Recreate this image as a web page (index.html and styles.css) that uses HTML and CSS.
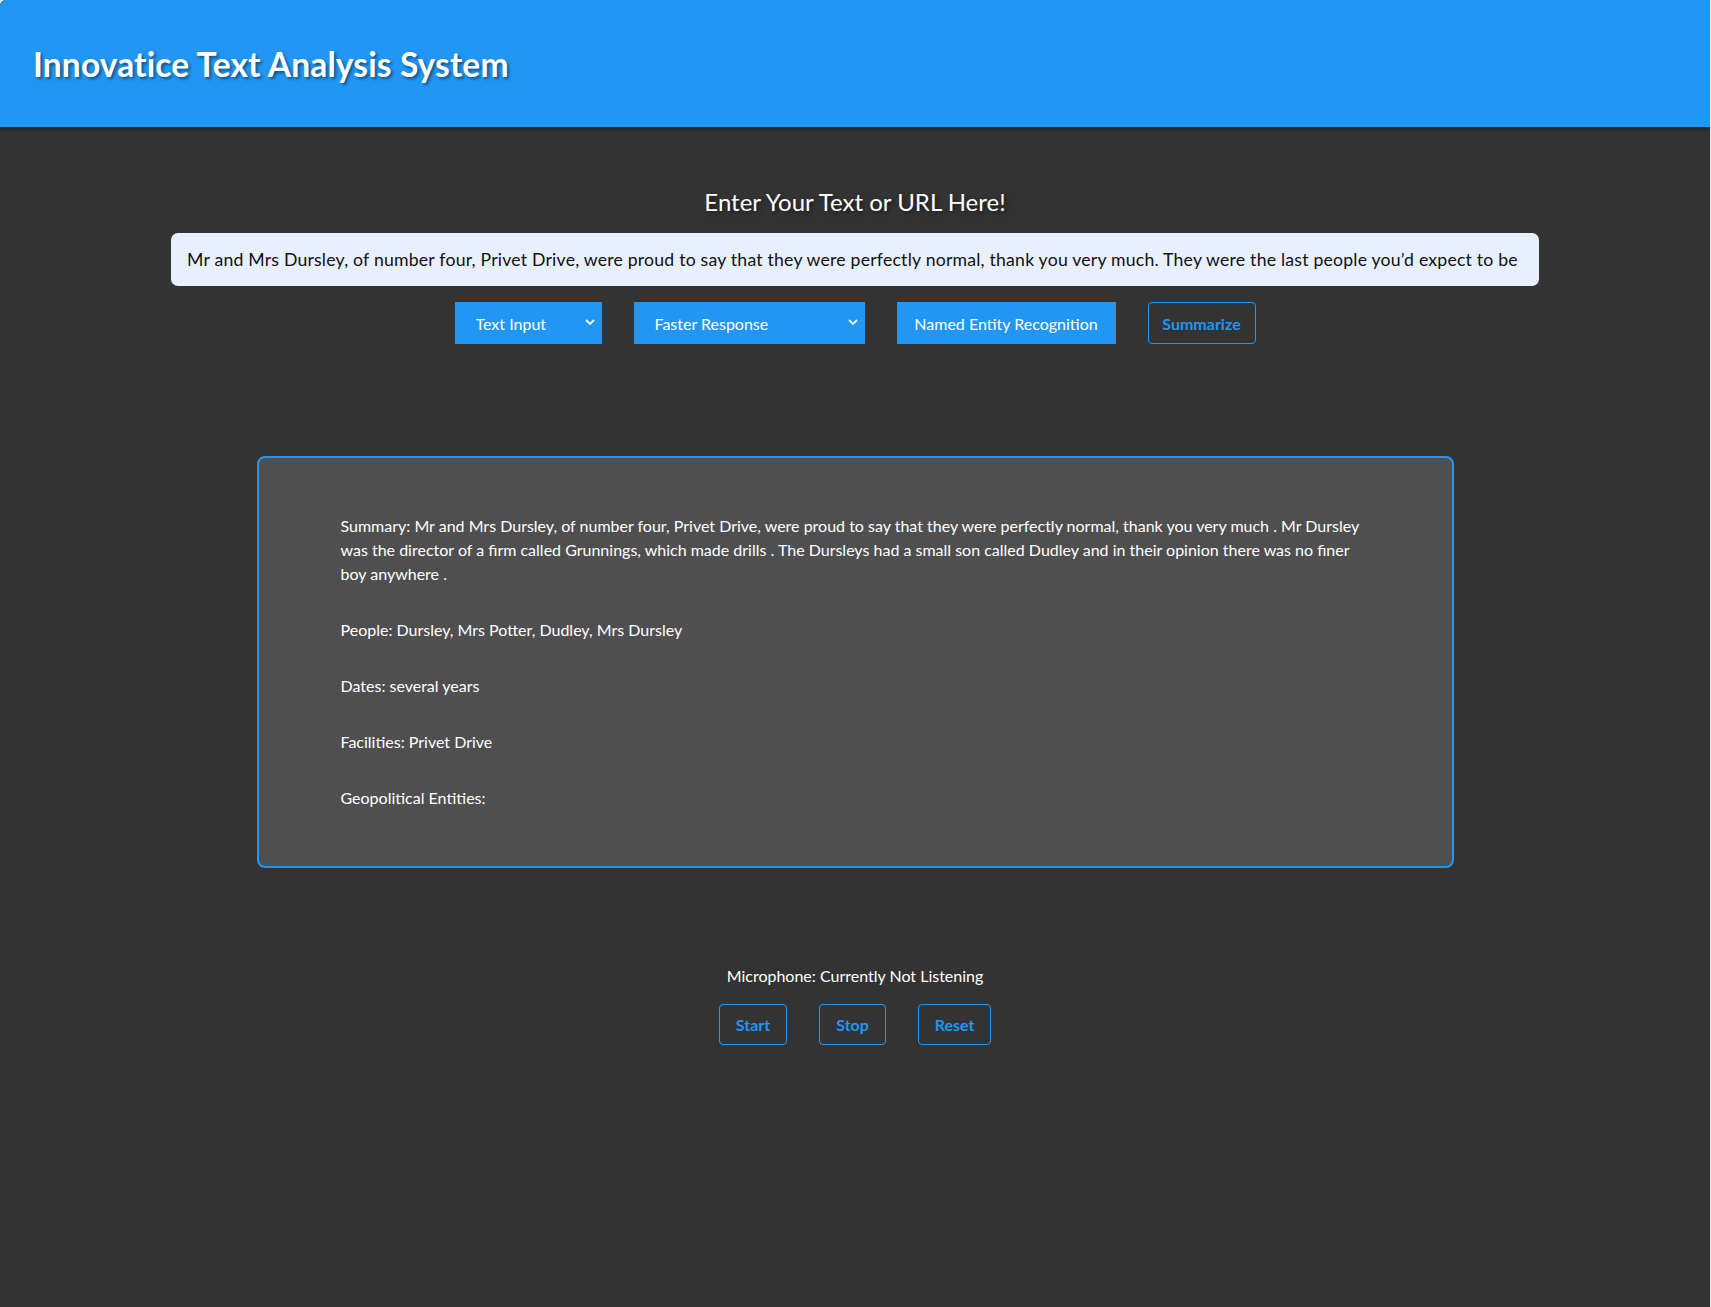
FILE: index.html
```html
<!DOCTYPE html>
<html lang="en">
<head>
<meta charset="utf-8">
<title>Innovatice Text Analysis System</title>
<link rel="stylesheet" href="styles.css">
</head>
<body>
<div class="page">
  <header class="topbar">
    <h1 class="title">Innovatice Text Analysis System</h1>
  </header>
  <main class="main">
    <h2 class="prompt">Enter Your Text or URL Here!</h2>
    <input class="text-input" type="text" value="Mr and Mrs Dursley, of number four, Privet Drive, were proud to say that they were perfectly normal, thank you very much. They were the last people you’d expect to be">
    <div class="controls">
      <div class="select-wrap select-mode">
        <select class="select">
          <option>Text Input</option>
        </select>
        <svg class="chevron" viewBox="0 0 10 6" width="10" height="6"><path d="M1 1l4 4 4-4" fill="none" stroke="#fff" stroke-width="1.8"/></svg>
      </div>
      <div class="select-wrap select-speed">
        <select class="select">
          <option>Faster Response</option>
        </select>
        <svg class="chevron" viewBox="0 0 10 6" width="10" height="6"><path d="M1 1l4 4 4-4" fill="none" stroke="#fff" stroke-width="1.8"/></svg>
      </div>
      <button class="btn-solid btn-ner">Named Entity Recognition</button>
      <button class="btn-outline btn-summarize">Summarize</button>
    </div>
    <section class="result">
      <p class="result-line">Summary: Mr and Mrs Dursley, of number four, Privet Drive, were proud to say that they were perfectly normal, thank you very much . Mr Dursley was the director of a firm called Grunnings, which made drills . The Dursleys had a small son called Dudley and in their opinion there was no finer boy anywhere .</p>
      <p class="result-line">People: Dursley, Mrs Potter, Dudley, Mrs Dursley</p>
      <p class="result-line">Dates: several years</p>
      <p class="result-line">Facilities: Privet Drive</p>
      <p class="result-line">Geopolitical Entities:</p>
    </section>
    <div class="mic">
      <p class="mic-status">Microphone: Currently Not Listening</p>
      <div class="mic-buttons">
        <button class="btn-outline btn-mic btn-start">Start</button>
        <button class="btn-outline btn-mic btn-stop">Stop</button>
        <button class="btn-outline btn-mic btn-reset">Reset</button>
      </div>
    </div>
  </main>
</div>
</body>
</html>
```
FILE: styles.css
```css
html, body {
  margin: 0;
  padding: 0;
}
body {
  background: #e9e9e9;
  font-family: "Lato", "Open Sans", sans-serif;
  color: #fff;
}
.page {
  width: 1710px;
  min-height: 1307px;
  background: #333333;
  border-top-left-radius: 6px;
  overflow: hidden;
}
.topbar {
  height: 127px;
  background: #2196f3;
  display: flex;
  align-items: center;
  padding-left: 33px;
  box-shadow: 0 2px 4px rgba(0, 0, 0, 0.35);
}
.title {
  margin: 0;
  font-size: 33.6px;
  font-weight: 700;
  color: #fff;
  text-shadow: 2px 2px 3px rgba(0, 0, 0, 0.45);
  letter-spacing: 0.1px;
}
.main {
  display: flex;
  flex-direction: column;
  align-items: center;
}
.prompt {
  margin: 60px 0 0;
  height: 30px;
  line-height: 30px;
  font-size: 24px;
  font-weight: 400;
  color: #fff;
  text-shadow: 2px 2px 4px rgba(0, 0, 0, 0.5);
}
.text-input {
  box-sizing: border-box;
  margin-top: 16px;
  width: 1368px;
  height: 53px;
  border: none;
  border-radius: 7px;
  background: #e8f0fe;
  padding: 0 16px;
  font-family: inherit;
  font-size: 17.65px;
  letter-spacing: 0.21px;
  color: #111;
  outline: none;
}
.controls {
  display: flex;
  gap: 32px;
  margin-top: 16px;
}
.select-wrap {
  position: relative;
  height: 42px;
}
.select-mode { width: 147px; }
.select-speed { width: 231px; }
.select {
  appearance: none;
  -webkit-appearance: none;
  width: 100%;
  height: 100%;
  border: none;
  border-radius: 0;
  background: #2196f3;
  color: #fff;
  font-family: inherit;
  font-size: 16px;
  padding: 0 20px 0 21px;
  outline: none;
}
.chevron {
  position: absolute;
  right: 7px;
  top: 17px;
  pointer-events: none;
}
.btn-solid {
  height: 42px;
  border: none;
  background: #2196f3;
  color: #fff;
  font-family: inherit;
  font-size: 16px;
  padding: 0;
}
.btn-ner { width: 219px; }
.btn-outline {
  height: 42px;
  border: 1px solid #2196f3;
  border-radius: 4px;
  background: transparent;
  color: #2196f3;
  font-family: inherit;
  font-size: 16px;
  font-weight: 700;
  padding: 0;
}
.btn-summarize { width: 108px; }
.result {
  box-sizing: border-box;
  margin-top: 112px;
  width: 1197px;
  min-height: 412px;
  border: 2px solid #2196f3;
  border-radius: 8px;
  background: #4f4f4f;
  padding: 56px 82px;
  display: flex;
  flex-direction: column;
  gap: 32px;
}
.result-line {
  margin: 0;
  font-size: 16px;
  line-height: 24px;
  color: #fff;
}
.mic {
  margin-top: 96px;
  display: flex;
  flex-direction: column;
  align-items: center;
}
.mic-status {
  margin: 0;
  font-size: 16px;
  line-height: 24px;
  color: #fff;
}
.mic-buttons {
  display: flex;
  gap: 32px;
  margin-top: 16px;
}
.btn-mic { height: 41px; }
.btn-start { width: 68px; }
.btn-stop { width: 67px; }
.btn-reset { width: 73px; }
```
